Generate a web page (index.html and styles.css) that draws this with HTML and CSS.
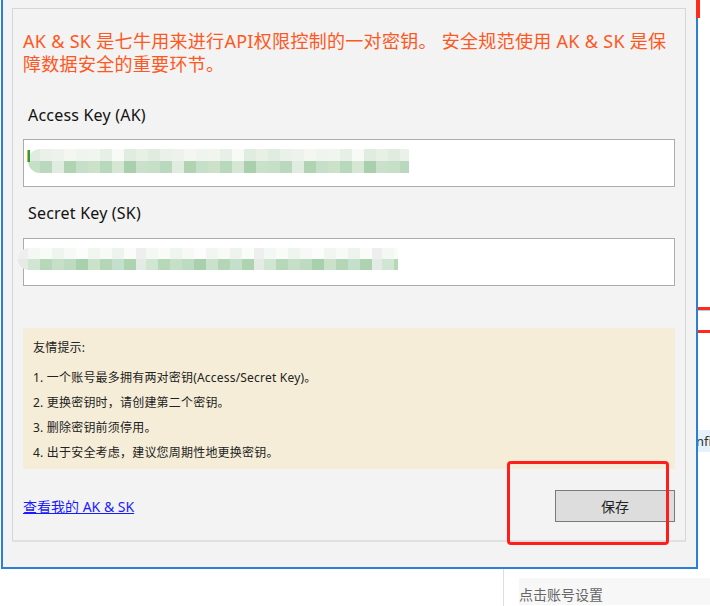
FILE: index.html
```html
<!DOCTYPE html>
<html>
<head>
    <meta charset="utf-8">
    <title>AK &amp; SK</title>
    <link rel="stylesheet" href="styles.css">
</head>
<body>
    <div class="desktop">
        <!-- bits of the app behind the dialog -->
        <div class="bg-tab"></div>
        <div class="bg-rule bg-rule-1"></div>
        <div class="bg-rule bg-rule-2"></div>
        <div class="bg-config">Config</div>
        <div class="bg-app">
            <div class="bg-app-row">点击账号设置</div>
        </div>

        <div class="window">
            <div class="panel">
                <p class="intro">AK &amp; SK 是七牛用来进行API权限控制的一对密钥。 安全规范使用 AK &amp; SK 是保障数据安全的重要环节。</p>

                <div class="field-label">Access Key (AK)</div>
                <div class="field">
                    <span class="caret"></span>
                    <span class="mosaic mosaic-ak"></span>
                </div>

                <div class="field-label second">Secret Key (SK)</div>
                <div class="field field-sk">
                    <span class="mosaic mosaic-sk"></span>
                </div>

                <div class="tips">
                    <div class="tips-title">友情提示:</div>
                    <div class="tip">1. 一个账号最多拥有两对密钥(Access/Secret Key)。</div>
                    <div class="tip">2. 更换密钥时，请创建第二个密钥。</div>
                    <div class="tip">3. 删除密钥前须停用。</div>
                    <div class="tip">4. 出于安全考虑，建议您周期性地更换密钥。</div>
                </div>

                <div class="footer">
                    <a class="link" href="#">查看我的 AK &amp; SK</a>
                    <button class="save">保存</button>
                </div>
            </div>
        </div>

        <div class="highlight"></div>
    </div>
</body>
</html>
```

FILE: styles.css
```css
body {
    margin: 0;
    background: #fff;
    font-family: "Noto Sans", "Noto Sans CJK SC", sans-serif;
    overflow: hidden;
}
.desktop {
    position: relative;
    height: 606px;
}

/* background app peeking out */
.bg-tab {
    position: absolute;
    left: 696px;
    top: 0;
    width: 4px;
    height: 18px;
    background: #ff2a1a;
    z-index: 2;
}
.bg-rule {
    position: absolute;
    left: 690px;
    right: 0;
    height: 3px;
    background: #ff2a1a;
}
.bg-rule-1 {
    top: 307px;
    border-bottom: 1px solid #a9d0f2;
}
.bg-rule-2 {
    top: 330px;
}
.bg-config {
    position: absolute;
    left: 680px;
    right: 0;
    top: 430px;
    height: 22px;
    line-height: 22px;
    font-size: 13px;
    color: #333;
    background: #e5f1fb;
    white-space: nowrap;
}
.bg-app {
    position: absolute;
    left: 503px;
    right: 0;
    top: 560px;
    bottom: 0;
    border-left: 1px solid #dedede;
}
.bg-app-row {
    margin: 18px 0 0 15px;
    padding-top: 5px;
    background: #f7f7f7;
    font-family: "Noto Sans CJK SC", sans-serif;
    font-size: 14px;
    line-height: 22px;
    color: #666;
}

/* dialog */
.window {
    position: relative;
    z-index: 1;
    margin-left: 1px;
    width: 697px;
    box-sizing: border-box;
    background: #f3f3f3;
    border: 2px solid #2b7fd4;
    border-top: none;
    padding: 8px 10px 25px 9px;
}
.panel {
    border: 1px solid #d6d6d6;
    border-bottom: 2px solid #e0e0e0;
    padding: 0 10px 18px 10px;
}
.intro {
    margin: 21px 6px 0 0;
    font-size: 18px;
    line-height: 23px;
    letter-spacing: 0.3px;
    color: #ff5722;
}
.field-label {
    margin: 28px 0 0 5px;
    font-size: 16px;
    line-height: 22px;
    letter-spacing: 0.2px;
    color: #111;
}
.field-label.second {
    margin-top: 15px;
}
.field {
    position: relative;
    margin-top: 13px;
    height: 48px;
    box-sizing: border-box;
    border: 1px solid #acacac;
    background: #fff;
    padding: 9px 0 0 4px;
}
.field-sk {
    margin-top: 14px;
    padding: 9px 0 0 0;
}
.caret {
    position: absolute;
    left: 3px;
    top: 10px;
    width: 2px;
    height: 12px;
    background: #2e9a3a;
    border-left: 1px solid #d8b43a;
}
.mosaic {
    display: block;
    height: 24px;
    border-radius: 12px 0 0 12px;
}
.mosaic-ak {
    width: 381px;
    background:
        repeating-linear-gradient(90deg, #e1ece1 0 12px, #e9f1e9 12px 24px, #edf3ec 24px 36px, #f4f7f0 36px 48px, #eef4ee 48px 60px, #f0f5ee 60px 72px, #e6f0e7 72px 84px, #f7faf5 84px 96px, #dfecdf 96px 108px, #e8f0e4 108px 120px) top / 100% 50% no-repeat,
        repeating-linear-gradient(90deg, #c6dfc7 0 12px, #bad8bd 12px 24px, #e0ece0 24px 36px, #b0d3b2 36px 48px, #c6dfc9 48px 60px, #cbe2c8 60px 72px, #b8d8bc 72px 84px, #d5e6d4 84px 96px, #a9cfac 96px 108px, #c9e0cb 108px 120px) bottom / 100% 50% no-repeat;
}
.mosaic-sk {
    margin-left: -6px;
    width: 380px;
    height: 22px;
    border-radius: 11px 0 0 11px;
    background:
        repeating-linear-gradient(90deg, #eeeeee 0 10px, #f4f8f4 10px 22px, #f8fbf8 22px 34px, #eef5ee 34px 46px, #f6f9f5 46px 58px, #fbfcfb 58px 70px, #f1f6f0 70px 82px, #f7faf7 82px 94px, #edf4ed 94px 106px, #fafcfa 106px 118px) top / 100% 50% no-repeat,
        repeating-linear-gradient(90deg, #e4ebe4 0 10px, #d1e6d2 10px 22px, #b6d8b9 22px 34px, #c5e0c6 34px 46px, #bcdbc0 46px 58px, #a9d0ad 58px 70px, #cbe2ca 70px 82px, #b4d6b7 82px 94px, #c4e0cc 94px 106px, #aed3b1 106px 118px) bottom / 100% 50% no-repeat;
}
.tips {
    margin-top: 42px;
    background: #f5edd7;
    padding: 7px 10px 4px;
    font-size: 12px;
    line-height: 25px;
    letter-spacing: 0.2px;
    color: #222;
}
.tips-title {
    margin-bottom: 5px;
}
.footer {
    margin-top: 21px;
    display: flex;
    justify-content: space-between;
    align-items: center;
}
.link {
    font-size: 14px;
    color: #1a1aff;
    text-decoration: underline;
}
.save {
    width: 120px;
    height: 32px;
    border: 1px solid #7a7a7a;
    background: #dddddd;
    font-family: inherit;
    font-size: 14px;
    color: #222;
    padding: 0;
}

/* red annotation box */
.highlight {
    position: absolute;
    left: 507px;
    top: 461px;
    width: 162px;
    height: 84px;
    box-sizing: border-box;
    border: 3px solid #ff1e1e;
    border-radius: 4px;
    z-index: 3;
}
```
